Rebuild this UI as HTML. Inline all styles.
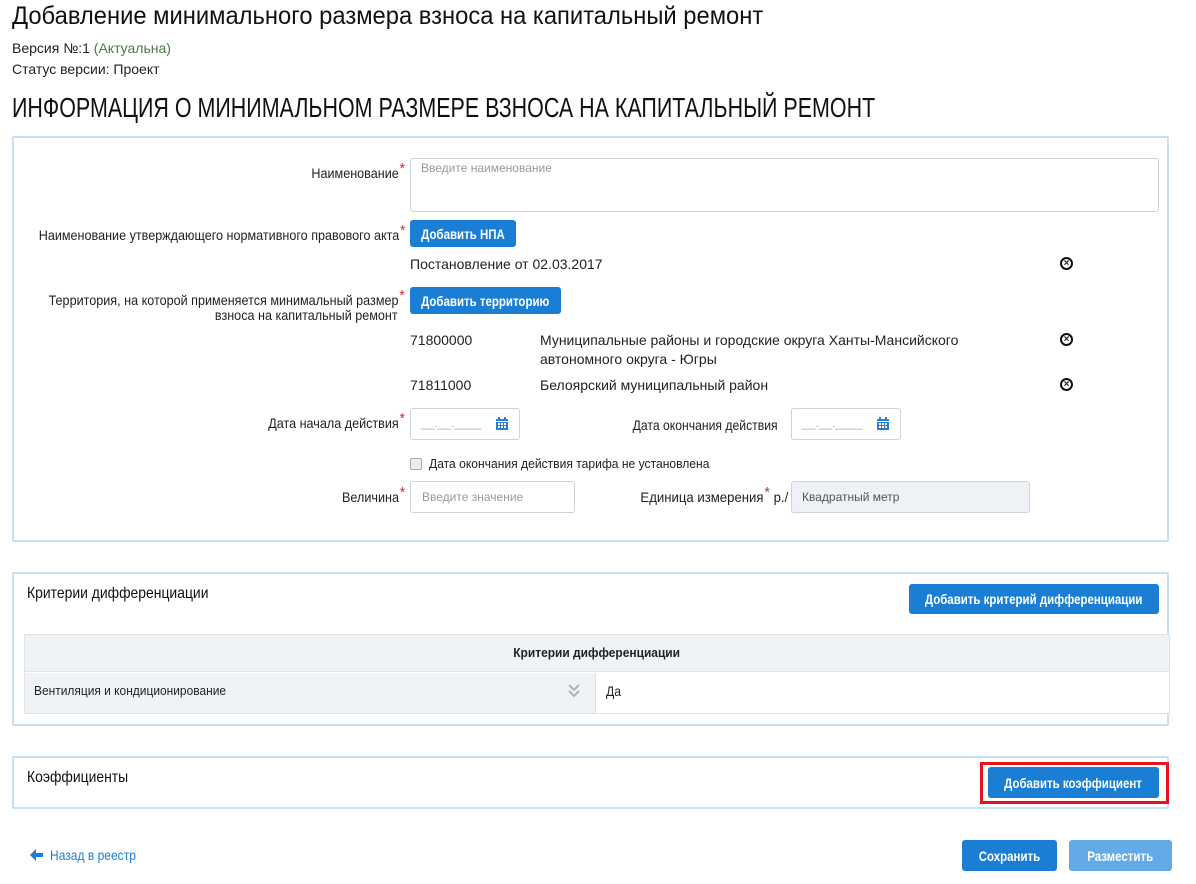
<!DOCTYPE html>
<html><head><meta charset="utf-8"><style>
*{box-sizing:border-box;margin:0;padding:0}
body{width:1196px;height:884px;background:#fff;position:relative;overflow:hidden;font-family:"Liberation Sans",sans-serif;color:#222}
.a{position:absolute;white-space:nowrap}
.n{transform-origin:left center}
.lab{font-size:14px;text-align:right;color:#222;transform:scaleX(0.9);transform-origin:right center}
.st{color:#c9302c;font-size:15px;position:relative;top:-5px;margin-left:1px}
.btn{position:absolute;background:#1a7fd4;color:#fff;border-radius:3px;font-weight:bold;font-size:14px;white-space:nowrap;display:flex;justify-content:center;align-items:center}
.btn span{display:inline-block;transform:scaleX(0.82);flex:none}
.panel{position:absolute;border:2px solid #c7e0f3;border-radius:2px;background:#fff}
.inp{position:absolute;border:1px solid #ccd3da;border-radius:3px;background:#fff}
.ph{color:#999;font-size:12px}
.x{position:absolute;width:13px;height:13px;border:2px solid #111;border-radius:50%;font-size:10px;line-height:9px;text-align:center;font-weight:bold}
.cal{position:absolute;width:14px;height:14px}
</style></head><body>
<div class="a n" style="left:12px;top:2px;font-size:25px;color:#111;transform:scaleX(0.95)">Добавление минимального размера взноса на капитальный ремонт</div>
<div class="a" style="left:12px;top:40px;font-size:14px">Версия №:1 <span style="color:#4a7a43">(Актуальна)</span></div>
<div class="a" style="left:12px;top:61px;font-size:14px">Статус версии: Проект</div>
<div class="a n" style="left:12px;top:92px;font-size:28px;color:#111;transform:scaleX(0.766)">ИНФОРМАЦИЯ О МИНИМАЛЬНОМ РАЗМЕРЕ ВЗНОСА НА КАПИТАЛЬНЫЙ РЕМОНТ</div>

<div class="panel" style="left:12px;top:136px;width:1157px;height:406px"></div>
<div class="a lab" style="right:791px;top:165px">Наименование<span class="st">*</span></div>
<div class="inp" style="left:410px;top:158px;width:749px;height:54px"><div class="ph" style="position:absolute;left:10px;top:2px">Введите наименование</div></div>
<div class="a lab" style="right:791px;top:227px">Наименование утверждающего нормативного правового акта<span class="st">*</span></div>
<div class="btn" style="left:410px;top:220px;width:106px;height:27px"><span>Добавить НПА</span></div>
<div class="a" style="left:410px;top:256px;font-size:14px">Постановление от 02.03.2017</div>
<div class="x" style="left:1060px;top:257px">×</div>
<div class="a lab" style="right:791px;top:293px;line-height:15px">Территория, на которой применяется минимальный размер<span class="st">*</span><br>взноса на капитальный ремонт&nbsp;&nbsp;</div>
<div class="btn" style="left:410px;top:287px;width:151px;height:27px"><span>Добавить территорию</span></div>
<div class="a" style="left:410px;top:332px;font-size:14px">71800000</div>
<div class="a" style="left:540px;top:331px;font-size:14px;line-height:19px">Муниципальные районы и городские округа Ханты-Мансийского<br>автономного округа - Югры</div>
<div class="x" style="left:1060px;top:333px">×</div>
<div class="a" style="left:410px;top:377px;font-size:14px">71811000</div>
<div class="a" style="left:540px;top:377px;font-size:14px">Белоярский муниципальный район</div>
<div class="x" style="left:1060px;top:378px">×</div>

<div class="a lab" style="right:791px;top:415px">Дата начала действия<span class="st">*</span></div>
<div class="inp" style="left:410px;top:408px;width:110px;height:32px"><div class="ph" style="position:absolute;left:10px;top:7px;color:#aaa">__.__.____</div>
<svg class="cal" style="left:84px;top:8px" viewBox="0 0 14 14"><rect x="1" y="2" width="12" height="11" fill="#2a7fd0"/><rect x="1" y="4" width="12" height="1" fill="#fff"/><g fill="#fff"><rect x="3" y="6" width="2" height="2"/><rect x="6" y="6" width="2" height="2"/><rect x="9" y="6" width="2" height="2"/><rect x="3" y="9" width="2" height="2"/><rect x="6" y="9" width="2" height="2"/><rect x="9" y="9" width="2" height="2"/></g><rect x="3" y="0" width="2" height="3" fill="#2a7fd0"/><rect x="9" y="0" width="2" height="3" fill="#2a7fd0"/></svg></div>
<div class="a lab" style="right:418px;top:417px;transform:scaleX(0.87)">Дата окончания действия</div>
<div class="inp" style="left:791px;top:408px;width:110px;height:32px"><div class="ph" style="position:absolute;left:10px;top:7px;color:#aaa">__.__.____</div>
<svg class="cal" style="left:84px;top:8px" viewBox="0 0 14 14"><rect x="1" y="2" width="12" height="11" fill="#2a7fd0"/><rect x="1" y="4" width="12" height="1" fill="#fff"/><g fill="#fff"><rect x="3" y="6" width="2" height="2"/><rect x="6" y="6" width="2" height="2"/><rect x="9" y="6" width="2" height="2"/><rect x="3" y="9" width="2" height="2"/><rect x="6" y="9" width="2" height="2"/><rect x="9" y="9" width="2" height="2"/></g><rect x="3" y="0" width="2" height="3" fill="#2a7fd0"/><rect x="9" y="0" width="2" height="3" fill="#2a7fd0"/></svg></div>
<div class="a" style="left:410px;top:458px;width:12px;height:12px;border:1px solid #aaa;border-radius:2px;background:#eee"></div>
<div class="a n" style="left:429px;top:456px;font-size:13px;transform:scaleX(0.93)">Дата окончания действия тарифа не установлена</div>
<div class="a lab" style="right:791px;top:489px">Величина<span class="st">*</span></div>
<div class="inp" style="left:410px;top:481px;width:165px;height:32px"><div class="ph" style="position:absolute;left:11px;top:8px">Введите значение</div></div>
<div class="a lab" style="right:408px;top:489px;transform:scaleX(0.94)">Единица измерения<span class="st">*</span> р./</div>
<div class="inp" style="left:791px;top:481px;width:239px;height:32px;background:#eef2f7"><div class="ph" style="position:absolute;left:10px;top:8px;color:#555">Квадратный метр</div></div>

<div class="panel" style="left:12px;top:572px;width:1157px;height:154px"></div>
<div class="a n" style="left:27px;top:585px;font-size:16px;color:#111;transform:scaleX(0.87)">Критерии дифференциации</div>
<div class="btn" style="left:909px;top:584px;width:250px;height:30px"><span>Добавить критерий дифференциации</span></div>
<div class="a" style="left:24px;top:634px;width:1146px;height:80px;border:1px solid #dde3e8;background:#fff"></div>
<div class="a" style="left:25px;top:635px;width:1144px;height:37px;background:#f0f3f6;border-bottom:1px solid #dde3e8"></div>
<div class="a" style="left:25px;top:645px;width:1144px;text-align:center;font-size:13px;font-weight:bold"><span style="display:inline-block;transform:scaleX(0.92)">Критерии дифференциации</span></div>
<div class="a" style="left:25px;top:673px;width:571px;height:40px;background:#f0f3f6;border-right:1px solid #dde3e8"></div>
<div class="a n" style="left:34px;top:683px;font-size:13px;transform:scaleX(0.92)">Вентиляция и кондиционирование</div>
<svg class="a" style="left:568px;top:684px" width="12" height="14" viewBox="0 0 12 14"><path d="M1 1 L6 6 L11 1 M1 7 L6 12 L11 7" stroke="#aab3bd" stroke-width="2" fill="none"/></svg>
<div class="a n" style="left:606px;top:683px;font-size:14px;transform:scaleX(0.87)">Да</div>

<div class="panel" style="left:12px;top:756px;width:1157px;height:53px"></div>
<div class="a n" style="left:27px;top:769px;font-size:16px;color:#111;transform:scaleX(0.87)">Коэффициенты</div>
<div class="a" style="left:980px;top:762px;width:189px;height:42px;border:3px solid #e8141b"></div>
<div class="btn" style="left:988px;top:767px;width:171px;height:31px"><span>Добавить коэффициент</span></div>

<svg class="a" style="left:30px;top:849px" width="13" height="12" viewBox="0 0 13 12"><path d="M6 0 L0 6 L6 12 L6 8 L13 8 L13 4 L6 4Z" fill="#1a7fd4"/></svg>
<div class="a n" style="left:50px;top:847px;font-size:14px;color:#1a7fd4;transform:scaleX(0.86)">Назад в реестр</div>
<div class="btn" style="left:962px;top:840px;width:95px;height:31px"><span>Сохранить</span></div>
<div class="btn" style="left:1069px;top:840px;width:103px;height:31px;background:#62abe6"><span>Разместить</span></div>
</body></html>
